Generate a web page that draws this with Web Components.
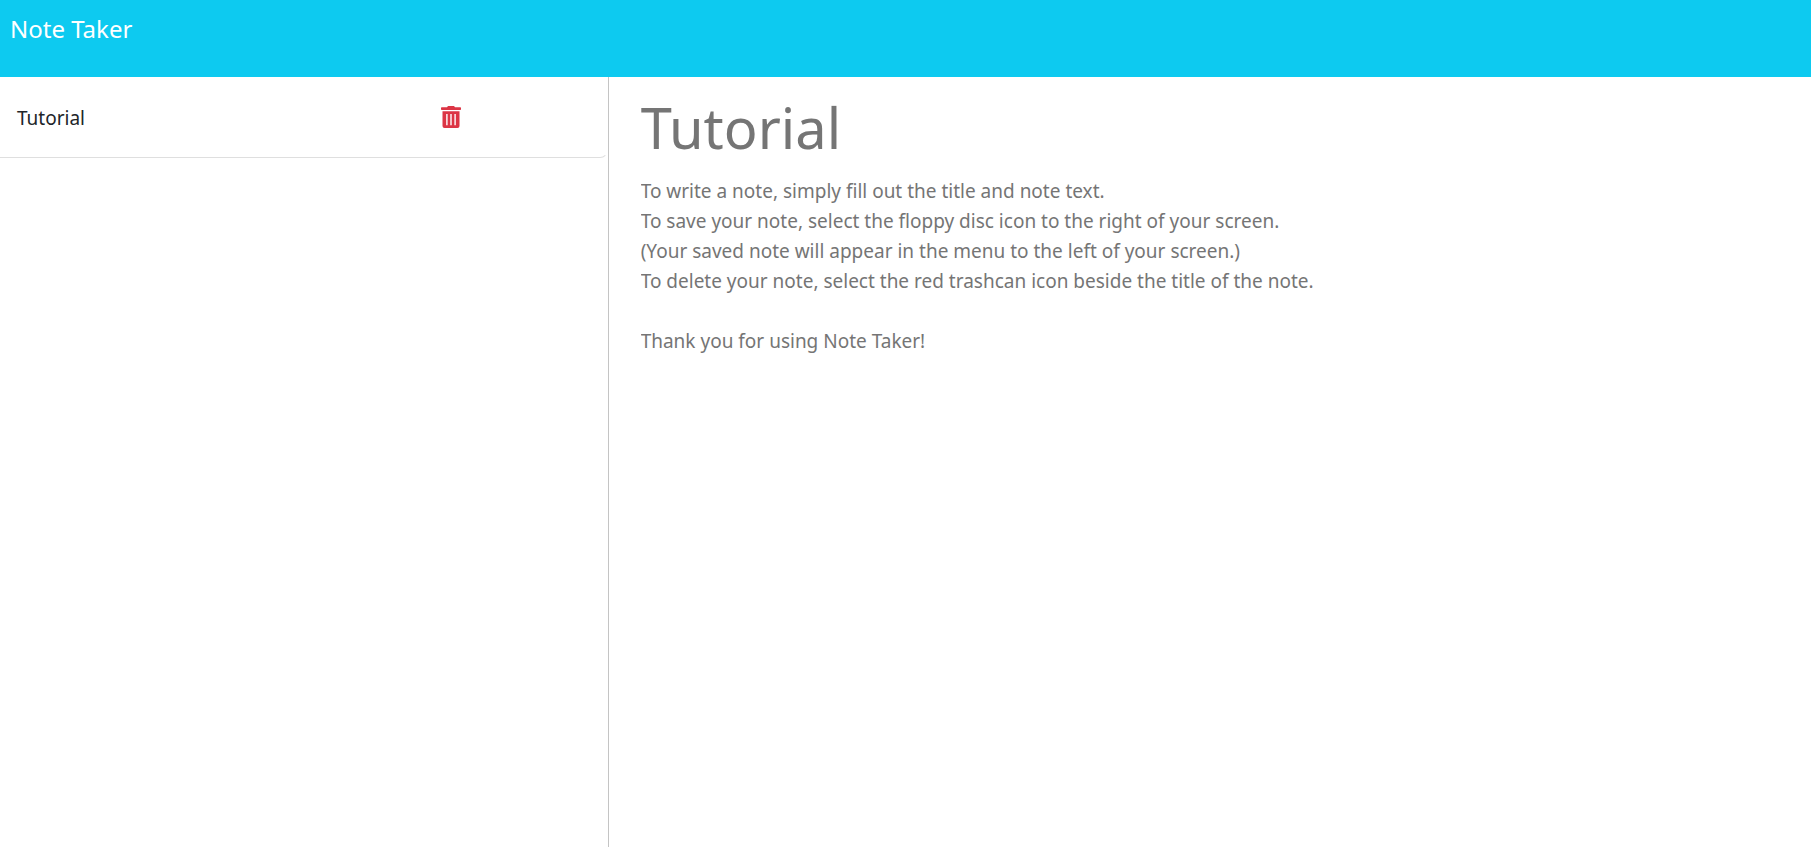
<!DOCTYPE html>
<html lang="en">
<head>
<meta charset="utf-8">
<meta name="viewport" content="width=device-width, initial-scale=1">
<title>Note Taker</title>
<style>
  html, body { height: 100%; margin: 0; }
  body { background: #fff; color: #212529; font: 19px/30px "Noto Sans", "Open Sans", sans-serif; }
</style>
</head>
<body>
<note-app>
  <note-header slot="header">Note Taker</note-header>
  <note-list slot="list">
    <note-item>Tutorial</note-item>
  </note-list>
  <note-editor slot="editor"></note-editor>
</note-app>
<script>
  const define = (name, html) => {
    const template = document.createElement('template');
    template.innerHTML = html;
    customElements.define(name, class extends HTMLElement {
      constructor() {
        super();
        this.attachShadow({ mode: 'open' }).append(template.content.cloneNode(true));
      }
    });
  };

  define('note-app', `
    <style>
      :host { display: flex; flex-direction: column; min-height: 100%; }
      main { flex: 1; display: grid; grid-template-columns: calc((100% + 12px) / 3) 1fr; }
    </style>
    <slot name="header"></slot>
    <main><slot name="list"></slot><slot name="editor"></slot></main>`);

  define('note-header', `
    <style>
      :host { display: block; }
      header { box-sizing: border-box; min-height: 77px; padding: 10px; background: #0dcaf0; }
      a { color: #fff; font-size: 24px; line-height: 38px; text-decoration: none; }
    </style>
    <header><a href="#"><slot></slot></a></header>`);

  define('note-list', `
    <style>
      :host { display: block; }
      ul { margin: 0; padding: 0; list-style: none; }
    </style>
    <ul><slot></slot></ul>`);

  define('note-item', `
    <style>
      :host { display: block; }
      li { display: grid; grid-template-columns: 2fr 1fr; align-items: start;
           box-sizing: border-box; min-height: 81px; padding: 26px 16px 0 17px;
           border-bottom: 1px solid #dfdfdf; border-right: 1px solid transparent; border-bottom-right-radius: 8px; }
      .title { padding: 0; border: 0; background: none; color: inherit; font: inherit; text-align: left; cursor: pointer; }
      .delete { display: block; justify-self: start; margin-left: 42px; padding: 3px 0; border: 0; background: none; color: #dc3545; cursor: pointer; }
      svg { display: block; }
    </style>
    <li>
      <button class="title" type="button"><slot></slot></button>
      <button class="delete" type="button" aria-label="Delete note">
        <svg width="20" height="22" viewBox="0 0 20 22" fill="currentColor" aria-hidden="true">
          <path fill-rule="evenodd" d="M.7 1.3H6L7 0H13L14 1.3H19.3Q20 1.3 20 2V3.3Q20 4 19.3 4H.7Q0 4 0 3.3V2Q0 1.3 .7 1.3ZM1.5 5.3H18.5V20Q18.5 22 16.5 22H3.5Q1.5 22 1.5 20ZM5.2 8V19.2H6.6V8ZM9.3 8V19.2H10.7V8ZM13.4 8V19.2H14.8V8Z"/>
        </svg>
      </button>
    </li>`);

  define('note-editor', `
    <style>
      :host { display: block; border-left: 1px solid #c4c4c4; padding: 14px 32px; }
      form { display: flex; flex-direction: column; }
      input, textarea { display: block; box-sizing: border-box; width: 100%; margin: 0; padding: 0; border: 0; outline: 0;
                        background: none; color: #212529; font: inherit; resize: none; }
      input { height: 72px; font-size: 56px; line-height: 72px; }
      textarea { min-height: 360px; margin-top: 13px; }
      ::placeholder { color: #757575; opacity: 1; }
    </style>
    <form>
      <input type="text" aria-label="Note title" placeholder="Tutorial">
      <textarea aria-label="Note text" placeholder="To write a note, simply fill out the title and note text.
To save your note, select the floppy disc icon to the right of your screen.
(Your saved note will appear in the menu to the left of your screen.)
To delete your note, select the red trashcan icon beside the title of the note.

Thank you for using Note Taker!"></textarea>
    </form>`);
</script>
</body>
</html>
